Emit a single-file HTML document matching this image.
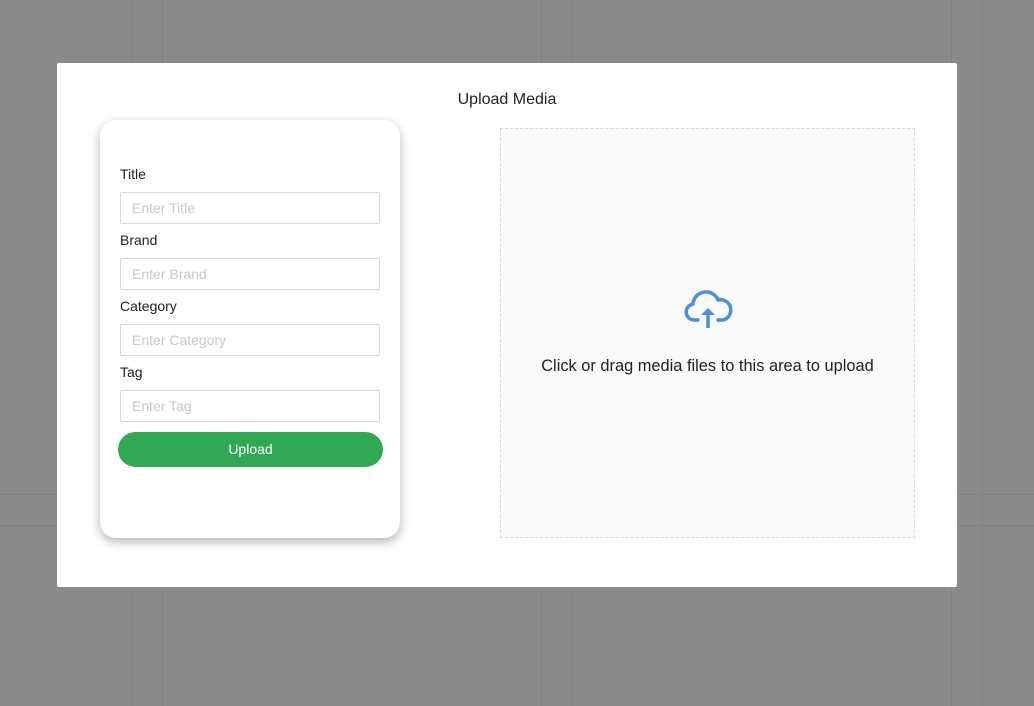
<!DOCTYPE html>
<html><head><meta charset="utf-8"><style>
*{box-sizing:border-box;margin:0;padding:0}
body{width:1034px;height:706px;background:#8a8a8a;position:relative;overflow:hidden;font-family:"Liberation Sans",sans-serif}
.vl{position:absolute;top:0;bottom:0;width:1px;background:#818181}
.hl{position:absolute;left:0;right:0;height:1px;background:#818181}
.modal{position:absolute;left:57px;top:63px;width:900px;height:524px;background:#fff;border-radius:2px}
.title{position:absolute;left:0;right:0;top:28px;text-align:center;font-size:16px;color:#222}
.card{position:absolute;left:43px;top:57px;width:300px;height:418px;background:#fff;border-radius:16px;box-shadow:0 4px 10px rgba(0,0,0,.3)}
.lbl{position:absolute;left:20px;font-size:14px;color:#222}
.inp{position:absolute;left:20px;width:260px;height:32px;border:1px solid #d9d9d9;border-radius:2px;font-size:14px;color:#c8c8c8;padding:7px 11px}
.btn{position:absolute;left:18px;top:312px;width:265px;height:35px;background:#31a853;border-radius:18px;color:#fff;font-size:14px;text-align:center;line-height:35px}
.drop{position:absolute;left:443px;top:65px;width:415px;height:410px;background:#fafafa;border:1px dashed #d9d9d9}
.dt{position:absolute;left:0;right:0;top:228px;text-align:center;font-size:16.4px;color:#222}
</style></head><body>
<div class="vl" style="left:131px"></div><div class="vl" style="left:162px"></div>
<div class="vl" style="left:541px"></div><div class="vl" style="left:572px"></div>
<div class="vl" style="left:951px"></div><div class="vl" style="left:982px"></div>
<div class="hl" style="top:494px"></div><div class="hl" style="top:525px"></div>
<div class="modal">
<div class="title">Upload Media</div>
<div class="card">
<div class="lbl" style="top:46px">Title</div><div class="inp" style="top:72px">Enter Title</div>
<div class="lbl" style="top:112px">Brand</div><div class="inp" style="top:138px">Enter Brand</div>
<div class="lbl" style="top:178px">Category</div><div class="inp" style="top:204px">Enter Category</div>
<div class="lbl" style="top:244px">Tag</div><div class="inp" style="top:270px">Enter Tag</div>
<div class="btn">Upload</div>
</div>
<div class="drop">
<svg style="position:absolute;left:181px;top:159px" width="52" height="42" viewBox="0 0 52 42">
<path d="M16 32H12a8 8 0 0 1-1-15.9A13 13 0 0 1 36 12a10 10 0 0 1 5 20h-5" fill="none" stroke="#4a8fe0" stroke-width="3.5" stroke-linecap="round" stroke-linejoin="round"/>
<path d="M26 40V24" stroke="#4a8fe0" stroke-width="3.5"/>
<path d="M19 27l7-7 7 7z" fill="#4a8fe0"/>
</svg>
<div class="dt">Click or drag media files to this area to upload</div>
</div>
</div>
</body></html>
